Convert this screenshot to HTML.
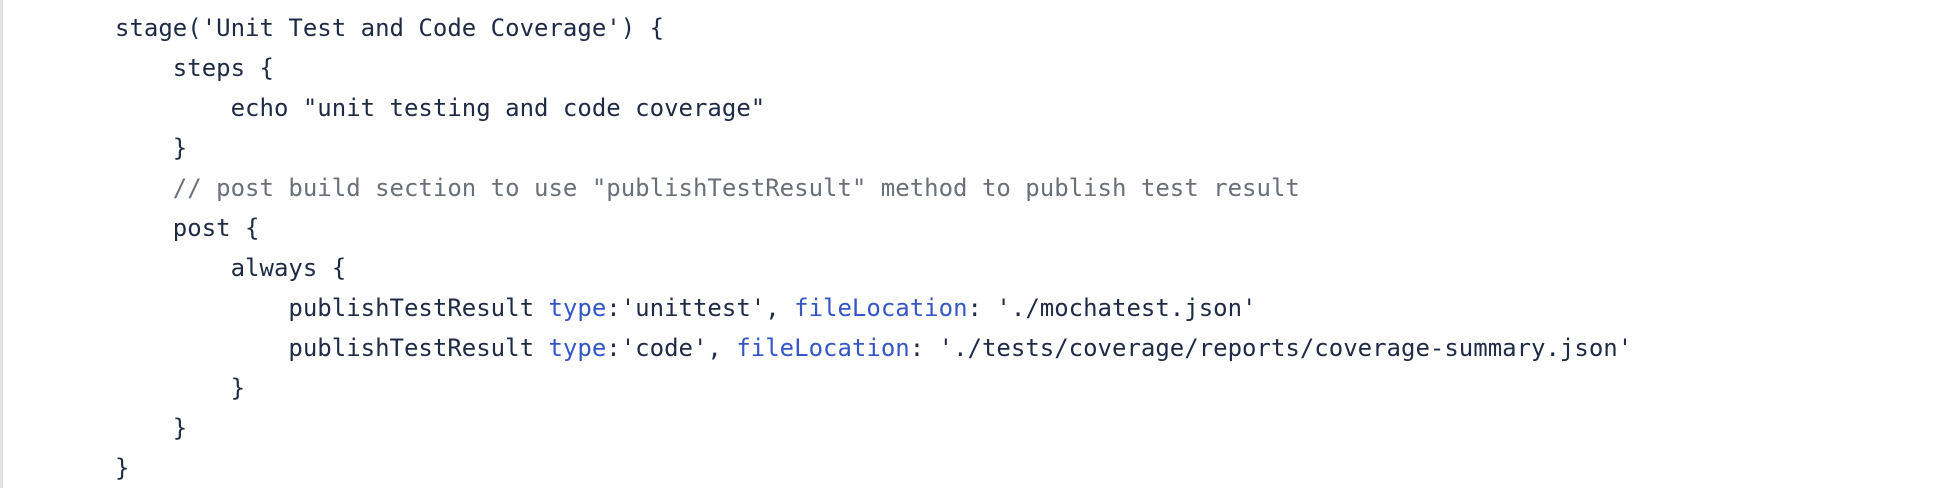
<!DOCTYPE html>
<html><head><meta charset="utf-8"><style>
html,body{margin:0;padding:0;background:#fff;width:1956px;height:488px;overflow:hidden}
.b{position:absolute;left:0;top:0;width:3px;height:488px;background:#e2e2e2}
pre{position:absolute;left:115px;top:8px;margin:0;font-family:"DejaVu Sans Mono","Liberation Mono",monospace;font-size:24px;line-height:40px;color:#1f2a44}
.c{color:#6a7078}.k{color:#3557c6}
</style></head><body><div class="b"></div>
<pre>stage('Unit Test and Code Coverage') {
    steps {
        echo "unit testing and code coverage"
    }
    <span class="c">// post build section to use "publishTestResult" method to publish test result</span>
    post {
        always {
            publishTestResult <span class="k">type</span>:'unittest', <span class="k">fileLocation</span>: './mochatest.json'
            publishTestResult <span class="k">type</span>:'code', <span class="k">fileLocation</span>: './tests/coverage/reports/coverage-summary.json'
        }
    }
}</pre>
</body></html>
